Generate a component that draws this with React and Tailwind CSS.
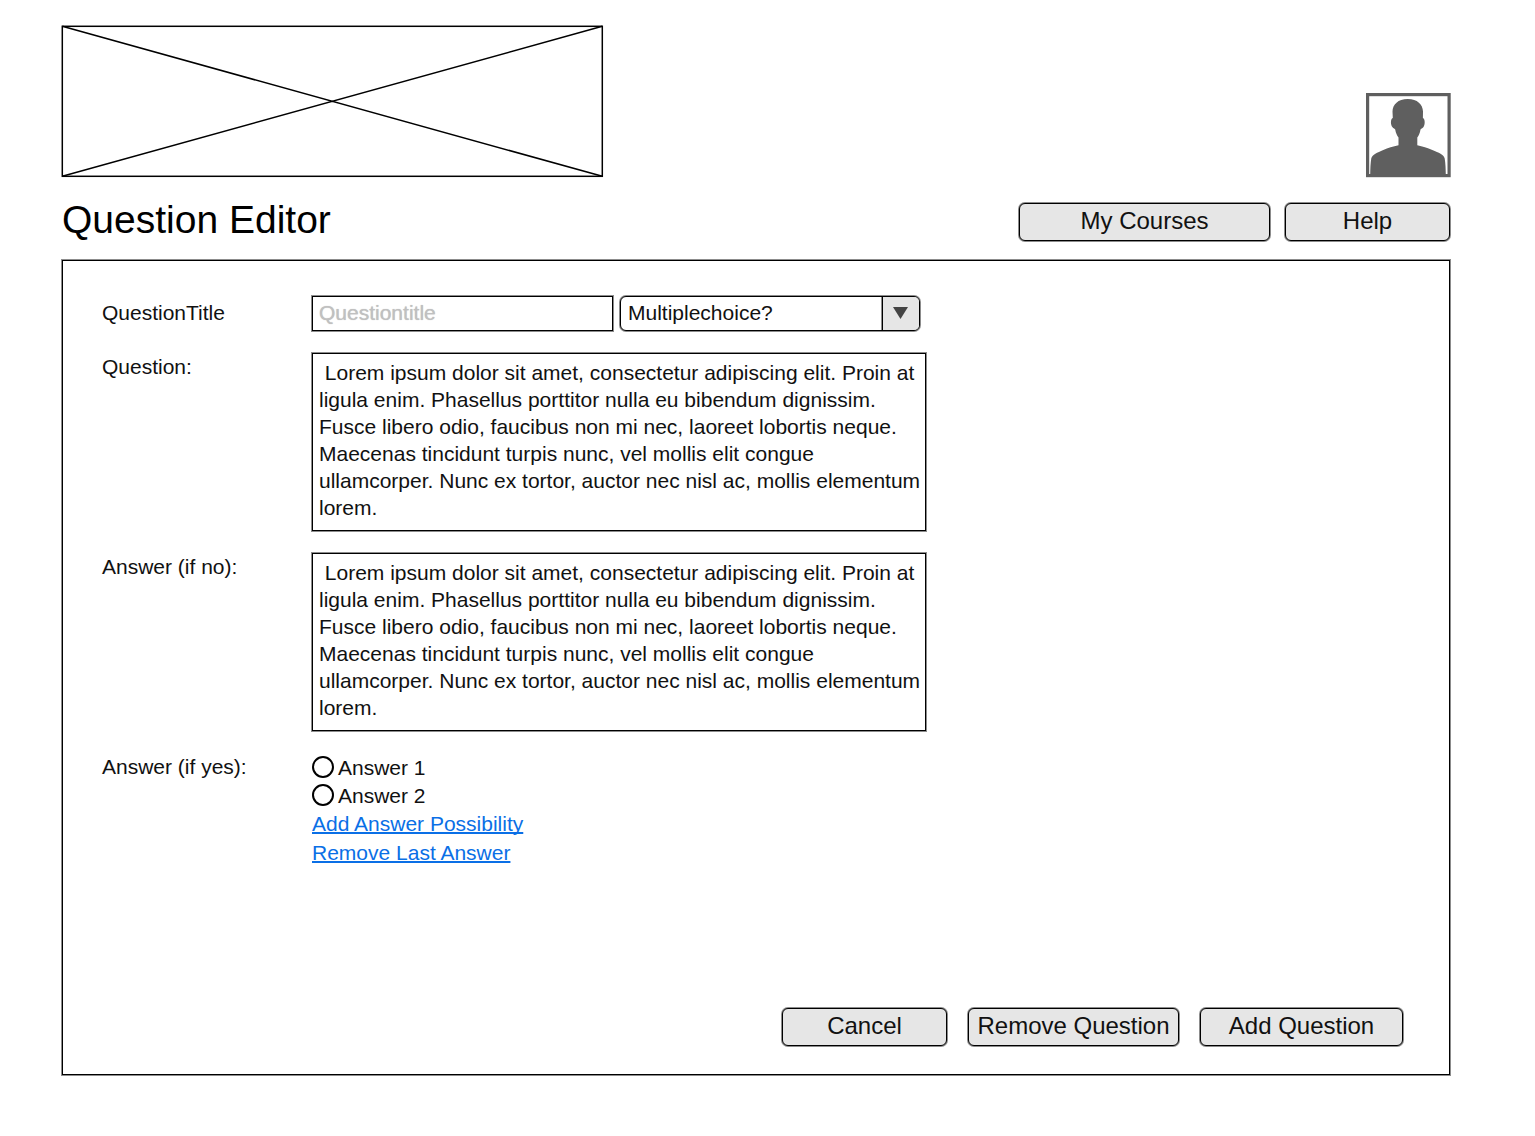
import React from "react";

const LOREM =
  " Lorem ipsum dolor sit amet, consectetur adipiscing elit. Proin at ligula enim. Phasellus porttitor nulla eu bibendum dignissim. Fusce libero odio, faucibus non mi nec, laoreet lobortis neque. Maecenas tincidunt turpis nunc, vel mollis elit congue ullamcorper. Nunc ex tortor, auctor nec nisl ac, mollis elementum lorem.";

function Button({ className, children }) {
  return (
    <button
      type="button"
      className={`h-[38px] rounded-md border border-black bg-[#e6e6e6] pb-0.5 text-2xl leading-8 whitespace-nowrap text-[#111] shadow-[0_0_0_1px_rgba(0,0,0,0.45)] ${className}`}
    >
      {children}
    </button>
  );
}

function TextLink({ href, children }) {
  return (
    <a
      href={href}
      className="leading-[29px] text-[#0a6fe6] underline underline-offset-1 [text-decoration-skip-ink:none]"
    >
      {children}
    </a>
  );
}

function LogoPlaceholder() {
  return (
    <svg viewBox="0 0 541 152" className="w-[541px] shrink overflow-visible" role="img" aria-label="Logo">
      <g fill="none" stroke="#000" strokeWidth="1.5">
        <rect x="0.3" y="1.3" width="540" height="150" />
        <path d="M0.300 1.300L540.300 151.300M540.300 1.300L0.300 151.300" />
      </g>
    </svg>
  );
}

function Avatar() {
  return (
    <svg viewBox="0 0 84 84" className="w-[84px] shrink-0 overflow-visible" role="img" aria-label="User">
      <rect x="1.6" y="1.6" width="81.500" height="81" fill="#fff" stroke="#5f5f5f" strokeWidth="3.2" />
      <path
        fill="#5f5f5f"
        d="M41.7 6C32 6 26.7 11.500 26.500 18.500L26.800 25C24.300 26 24.500 32 26.500 34.200C27.500 35.500 28.800 35.600 29.200 36.500C29.800 40 31 42.500 32.500 44.500V52.300C27 53.300 22 55 17.300 57C11 59.700 6.500 61.500 5.300 65.300C4.500 70 4.300 76 4.200 82H79.800C79.700 76 79.500 70 78.700 65.500C77.500 61.500 73 59.700 66.300 57C61.500 55 56.500 53.300 51.300 52.300V44.500C52.800 42.500 54 40 54.500 36.500C55 35.600 56.300 35.500 57.300 34.200C59.200 32 59.300 26 56.900 25L57 18.500C56.800 11.500 51.400 6 41.700 6Z"
      />
    </svg>
  );
}

function TextBlock({ id }) {
  return (
    <textarea
      id={id}
      rows={6}
      defaultValue={LOREM}
      className="block h-[178px] w-[614px] max-w-full resize-none overflow-hidden border border-black bg-white py-[5px] pr-1 pl-[6px] leading-[27px] shadow-[0_0_0_1px_rgba(0,0,0,0.45)] outline-none"
    />
  );
}

function AnswerOption({ label }) {
  return (
    <label className="flex h-7 items-center gap-1">
      <input
        type="radio"
        name="answer"
        className="size-[22px] shrink-0 appearance-none rounded-full border-2 border-black bg-white checked:bg-black"
      />
      {label}
    </label>
  );
}

export default function App() {
  return (
    <div className="flex min-h-screen flex-col bg-white pt-[25px] pr-[85px] pb-[61px] pl-[62px] font-['Liberation_Sans',Arial,sans-serif] text-black">
      <header>
        <div className="flex items-end justify-between">
          <LogoPlaceholder />
          <Avatar />
        </div>
        <div className="mt-[26px] flex items-start justify-between">
          <h1 className="text-[39px] leading-[34px]">Question Editor</h1>
          <nav className="flex gap-[15px]">
            <Button className="w-[251px]">My Courses</Button>
            <Button className="w-[165px]">Help</Button>
          </nav>
        </div>
      </header>

      <form className="mt-[19px] flex flex-1 flex-col border border-black pt-[35px] pr-[46px] pb-7 pl-[39px] text-[21px] leading-[27px] text-[#111] shadow-[0_0_0_1px_rgba(0,0,0,0.45)]">
        <div className="grid grid-cols-[210px_1fr] gap-y-[22px]">
          <label htmlFor="title" className="self-center pb-0.5">
            QuestionTitle
          </label>
          <div className="flex gap-[7px]">
            <input
              id="title"
              type="text"
              placeholder="Questiontitle"
              className="h-[35px] w-[301px] border border-black px-[6px] pb-0.5 shadow-[0_0_0_1px_rgba(0,0,0,0.45)] outline-none placeholder:text-[#c0c0c0] placeholder:[text-shadow:0_0_1px_#c0c0c0]"
            />
            <div className="relative">
              <select
                aria-label="Question type"
                className="h-[35px] w-[300px] appearance-none rounded-md border border-black bg-white pb-0.5 pl-[7px] shadow-[0_0_0_1px_rgba(0,0,0,0.45)] outline-none"
              >
                <option>Multiplechoice?</option>
              </select>
              <span className="pointer-events-none absolute inset-y-px right-px flex w-[37px] justify-center rounded-r-[5px] border-l border-black bg-[#e6e6e6] pt-2.5 pr-0.5 shadow-[-1px_0_0_rgba(0,0,0,0.45)]">
                <svg viewBox="0 0 15 12" className="h-3 w-[15px]" aria-hidden="true">
                  <path d="M0 0H15L7.500 12Z" fill="#444" />
                </svg>
              </span>
            </div>
          </div>

          <label htmlFor="question">Question:</label>
          <TextBlock id="question" />

          <label htmlFor="answer-no">Answer (if no):</label>
          <TextBlock id="answer-no" />

          <div id="answer-yes">Answer (if yes):</div>
          <div role="radiogroup" aria-labelledby="answer-yes" className="flex flex-col items-start">
            <AnswerOption label="Answer 1" />
            <AnswerOption label="Answer 2" />
            <TextLink href="#add">Add Answer Possibility</TextLink>
            <TextLink href="#remove">Remove Last Answer</TextLink>
          </div>
        </div>

        <div className="mt-auto flex justify-end gap-[21px]">
          <Button className="w-[165px]">Cancel</Button>
          <Button className="w-[211px]">Remove Question</Button>
          <Button className="w-[203px]">Add Question</Button>
        </div>
      </form>
    </div>
  );
}
